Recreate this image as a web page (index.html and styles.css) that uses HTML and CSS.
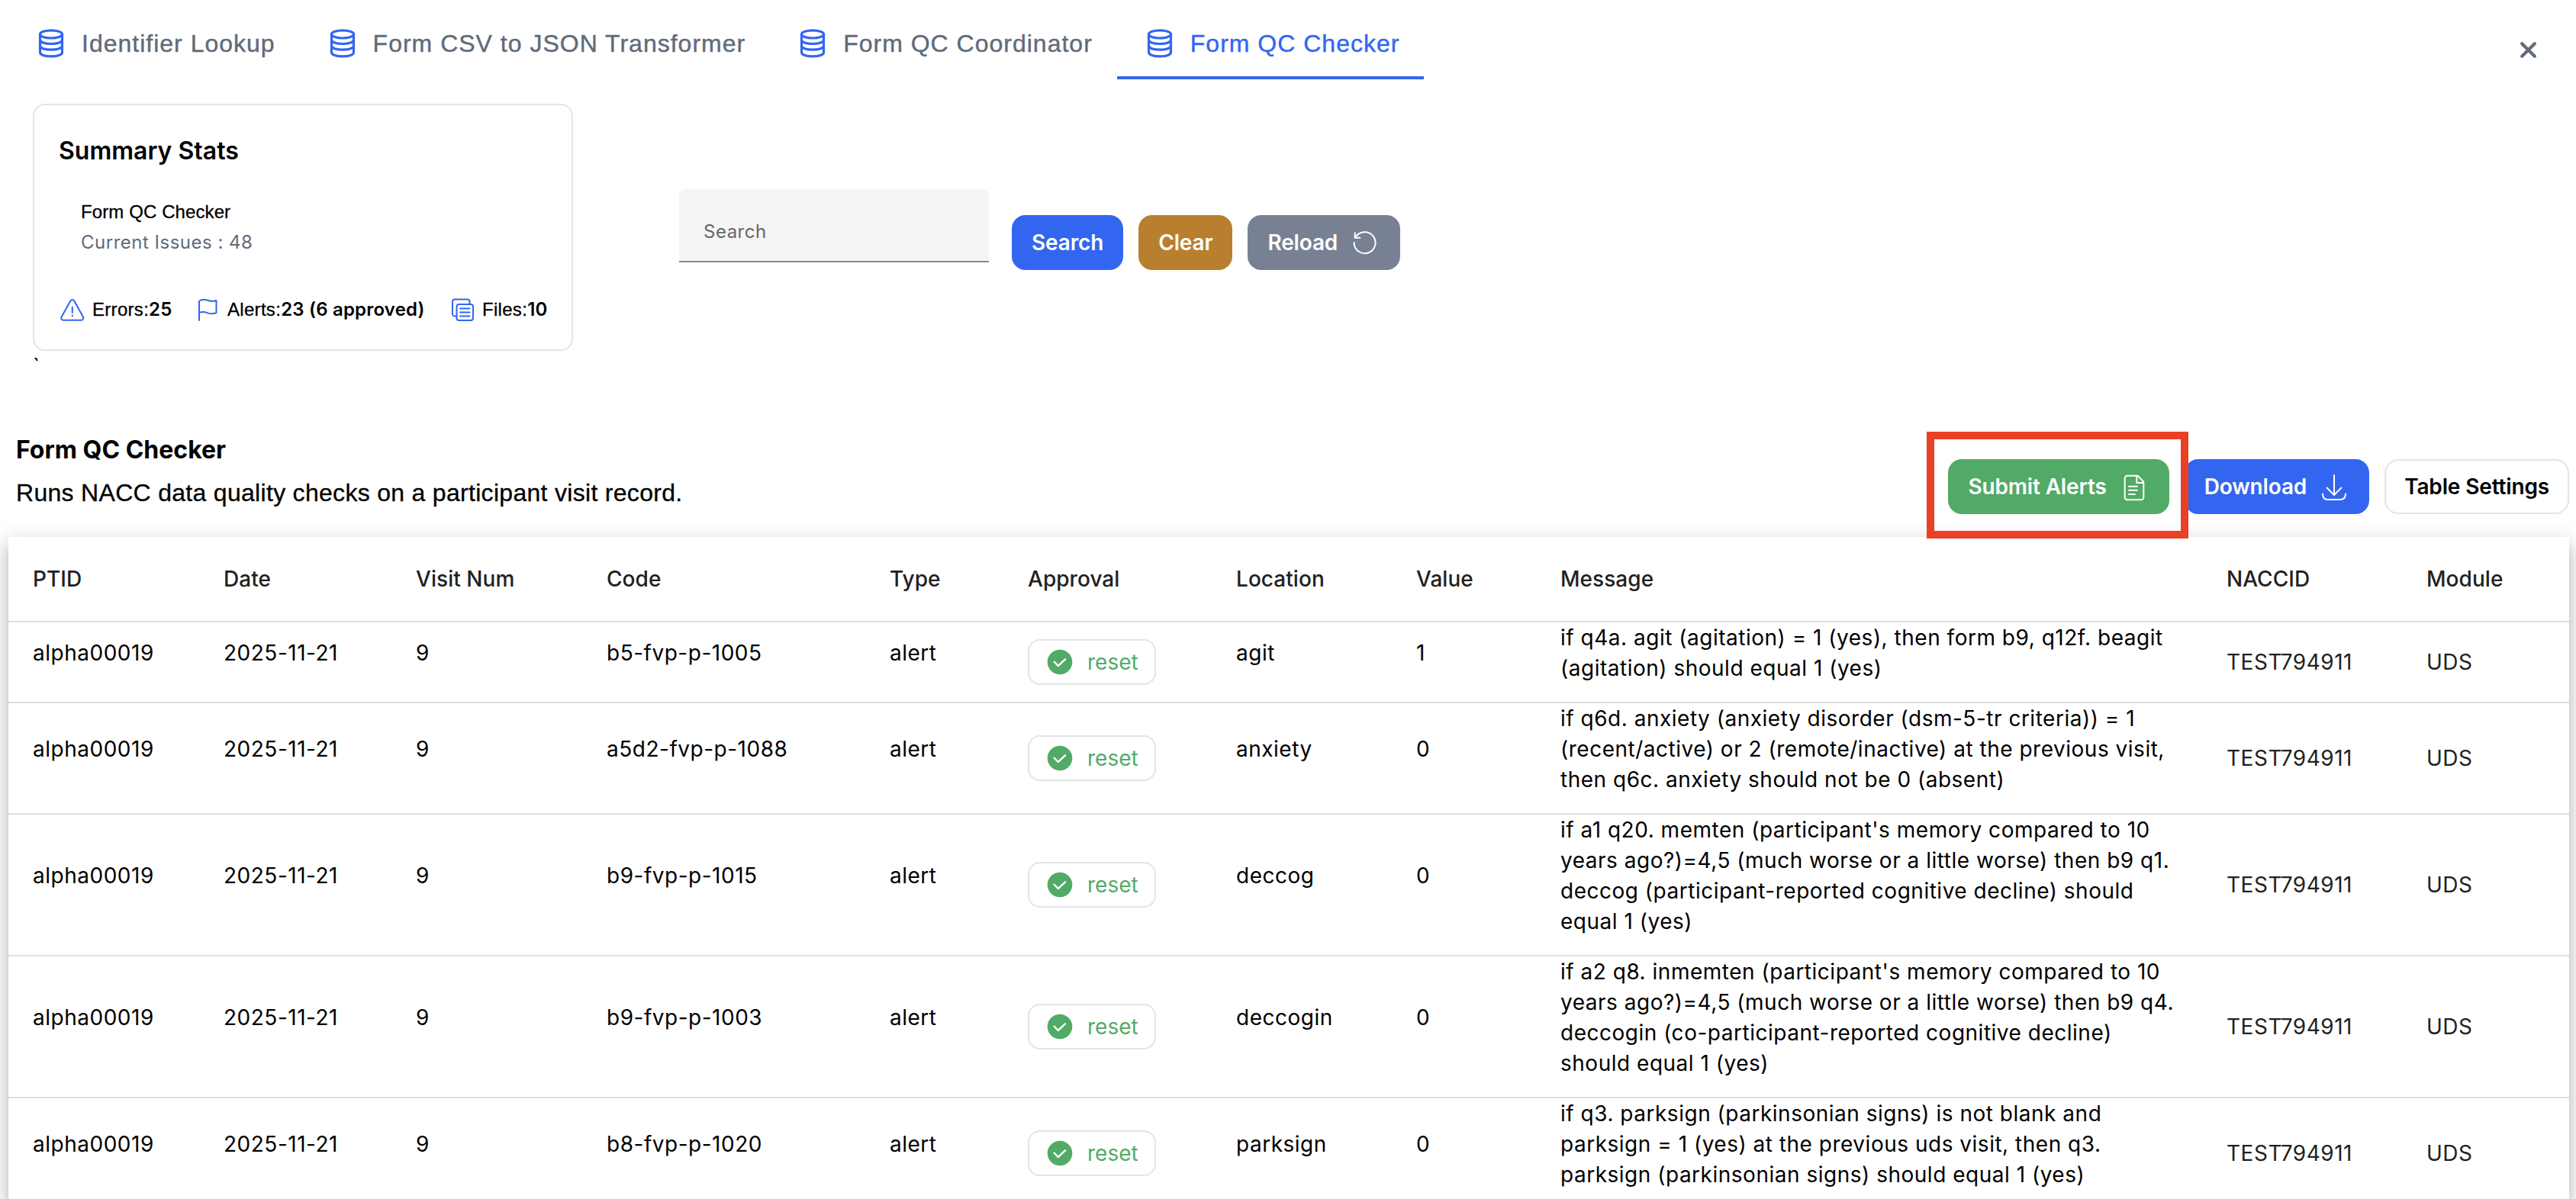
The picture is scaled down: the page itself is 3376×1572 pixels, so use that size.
FILE: index.html
```html
<!DOCTYPE html>
<html lang="en">
<head>
<meta charset="utf-8">
<title>Form QC Checker</title>
<link rel="stylesheet" href="styles.css">
</head>
<body>
<svg class="defs" width="0" height="0">
  <symbol id="db" viewBox="0 0 48 48"><ellipse cx="24" cy="11.9" rx="14.5" ry="5.1"/><path d="M9.5 11.9v23.8c0 3 6 5.2 14.5 5.2s14.5-2.200 14.500-5.200V11.900M9.500 19.300c0 3 6 5.200 14.500 5.200s14.500-2.200 14.500-5.200M9.500 27c0 3 6 5.200 14.500 5.200s14.500-2.200 14.500-5.200"/></symbol>
  <symbol id="check" viewBox="0 0 34 34"><circle cx="17" cy="17" r="16.300" fill="currentColor" stroke="none"/><path d="M9.700 16.700l5 5.300 9.300-8.700" stroke="#fff" stroke-width="2.400"/></symbol>
</svg>

<header class="topbar">
  <nav class="tabs">
    <a class="tab"><svg class="icon db"><use href="#db"/></svg>Identifier Lookup</a>
    <a class="tab"><svg class="icon db"><use href="#db"/></svg>Form CSV to JSON Transformer</a>
    <a class="tab"><svg class="icon db"><use href="#db"/></svg>Form QC Coordinator</a>
    <a class="tab active"><svg class="icon db"><use href="#db"/></svg>Form QC Checker</a>
  </nav>
  <svg class="icon close" viewBox="0 0 24 24"><path d="M4 4l16 16M20 4L4 20"/></svg>
</header>

<section class="overview">
  <div class="summary">
    <div class="card">
      <h2 class="card-title">Summary Stats</h2>
      <div class="card-name">Form QC Checker</div>
      <div class="card-issues">Current Issues : 48</div>
      <div class="stats">
        <div class="stat stat-errors"><svg class="icon small" viewBox="0 0 36 36"><path d="M15.200 6.800L3.800 27.200c-1.300 2.400 0 4.600 2.700 4.600h22.600c2.700 0 4-2.200 2.700-4.600L20.400 6.800c-1.300-2.400-3.900-2.400-5.200 0zM17.800 14.500v7.500M17.800 25.600v1"/></svg><span>Errors:<b>25</b></span></div>
        <div class="stat stat-alerts"><svg class="icon small" viewBox="0 0 36 36"><path d="M7 32V7c3-3.500 8-2.500 12-1 4 1.200 7.500 1 10.500 0v16c-4 2-8 1.600-12 .1-3.500-1.300-7-1.300-10.500-.1"/></svg><span>Alerts:<b>23 (6 approved)</b></span></div>
        <div class="stat stat-files"><svg class="icon small" viewBox="0 0 36 36"><path d="M10.500 26.500H8a3 3 0 0 1-3-3V7.500a3 3 0 0 1 3-3h16.500a3 3 0 0 1 3 3V11"/><rect x="10.500" y="11" width="21.500" height="21" rx="3"/><path d="M15 16.500h12.500M15 21.500h12.500M15 26.500h12.500"/></svg><span>Files:<b>10</b></span></div>
      </div>
    </div>
    <div class="stray">`</div>
  </div>
  <div class="search-row">
    <div class="field">Search</div>
    <button class="btn blue">Search</button>
    <button class="btn amber">Clear</button>
    <button class="btn gray">Reload<svg class="icon mid" viewBox="0 0 40 40"><path d="M5.600 20A14 14 0 1 0 7.800 12.700M6.700 7.300v6.400h6.700"/></svg></button>
  </div>
</section>

<section class="heading">
  <div class="heading-text">
    <h1 class="title">Form QC Checker</h1>
    <p class="desc">Runs NACC data quality checks on a participant visit record.</p>
  </div>
  <div class="actions">
    <div class="submit-wrap">
      <button class="btn green">Submit Alerts<svg class="icon mid" viewBox="0 0 40 40"><path d="M24.700 5.700H11a3.300 3.300 0 0 0-3.300 3.300v25a3.300 3.300 0 0 0 3.300 3.300h18a3.300 3.300 0 0 0 3.300-3.300V13.600zM23.300 5.700v9.300h9M13 19.700h11M13 24.700h11M13 30h8"/></svg></button>
      <div class="callout"></div>
    </div>
    <button class="btn blue">Download<svg class="icon mid" viewBox="0 0 40 40"><path d="M20 5v26M10.500 21.500L20 31l9.500-9.500M5 29.500c0 4.800 2.500 7.500 7 7.500h16c4.500 0 7-2.700 7-7.500"/></svg></button>
    <button class="btn outline">Table Settings</button>
  </div>
</section>

<main class="table">
  <div class="row head"><div>PTID</div><div>Date</div><div>Visit Num</div><div>Code</div><div>Type</div><div>Approval</div><div>Location</div><div>Value</div><div>Message</div><div>NACCID</div><div>Module</div></div>
  <div class="row"><p>alpha00019</p><p>2025-11-21</p><p>9</p><p>b5-fvp-p-1005</p><p>alert</p><button class="reset"><svg class="icon tick"><use href="#check"/></svg>reset</button><p>agit</p><p>1</p><p class="msg">if q4a. agit (agitation) = 1 (yes), then form b9, q12f. beagit (agitation) should equal 1 (yes)</p><div>TEST794911</div><div>UDS</div></div>
  <div class="row"><p>alpha00019</p><p>2025-11-21</p><p>9</p><p>a5d2-fvp-p-1088</p><p>alert</p><button class="reset"><svg class="icon tick"><use href="#check"/></svg>reset</button><p>anxiety</p><p>0</p><p class="msg">if q6d. anxiety (anxiety disorder (dsm-5-tr criteria)) = 1 (recent/active) or 2 (remote/inactive) at the previous visit, then q6c. anxiety should not be 0 (absent)</p><div>TEST794911</div><div>UDS</div></div>
  <div class="row"><p>alpha00019</p><p>2025-11-21</p><p>9</p><p>b9-fvp-p-1015</p><p>alert</p><button class="reset"><svg class="icon tick"><use href="#check"/></svg>reset</button><p>deccog</p><p>0</p><p class="msg">if a1 q20. memten (participant's memory compared to 10 years ago?)=4,5 (much worse or a little worse) then b9 q1. deccog (participant-reported cognitive decline) should equal 1 (yes)</p><div>TEST794911</div><div>UDS</div></div>
  <div class="row"><p>alpha00019</p><p>2025-11-21</p><p>9</p><p>b9-fvp-p-1003</p><p>alert</p><button class="reset"><svg class="icon tick"><use href="#check"/></svg>reset</button><p>deccogin</p><p>0</p><p class="msg">if a2 q8. inmemten (participant's memory compared to 10 years ago?)=4,5 (much worse or a little worse) then b9 q4. deccogin (co-participant-reported cognitive decline) should equal 1 (yes)</p><div>TEST794911</div><div>UDS</div></div>
  <div class="row last"><p>alpha00019</p><p>2025-11-21</p><p>9</p><p>b8-fvp-p-1020</p><p>alert</p><button class="reset"><svg class="icon tick"><use href="#check"/></svg>reset</button><p>parksign</p><p>0</p><p class="msg">if q3. parksign (parkinsonian signs) is not blank and parksign = 1 (yes) at the previous uds visit, then q3. parksign (parkinsonian signs) should equal 1 (yes)</p><div>TEST794911</div><div>UDS</div></div>
</main>
</body>
</html>
```

FILE: styles.css
```css
* { box-sizing: border-box; }
html { height: 1572px; overflow: hidden; }
body {
  margin: 0;
  height: 1572px;
  overflow: hidden;
  background: #fff;
  color: #000;
  font: 28px/40px Inter, "Liberation Sans", sans-serif;
}
h1, h2, p { margin: 0; }
button { font: inherit; border: 0; background: none; cursor: pointer; }
.defs { display: block; }
.icon { flex: none; fill: none; stroke: currentColor; stroke-width: 2; stroke-linecap: round; stroke-linejoin: round; }

.topbar { display: flex; justify-content: space-between; height: 104px; padding: 0 50px 0 11px; }
.tabs { display: flex; }
.tab {
  display: flex;
  align-items: center;
  gap: 16px;
  padding: 14px 32px 0;
  border-bottom: 4px solid transparent;
  color: #5f6b7a;
  font: 32px/48px "Liberation Sans", sans-serif;
  letter-spacing: 1px;
  -webkit-text-stroke: .4px currentColor;
}
.tab.active { color: #3366f0; border-bottom-color: #3366f0; }
.icon.db { width: 48px; height: 48px; color: #3366f0; stroke-width: 3.2; }
.close { width: 25px; height: 25px; margin-top: 53px; color: #5f6b7a; stroke-width: 4; }

.overview { display: flex; height: 442px; padding: 32px 0 0 43px; }
.card {
  width: 708px;
  height: 324px;
  padding: 38px 30px 0 32px;
  border: 2px solid #e4e4e9;
  border-radius: 16px;
}
.card-title { font-size: 32px; line-height: 44px; font-weight: 600; }
.card-name { margin: 38px 0 0 29px; font: 24px/40px "Liberation Sans", sans-serif; letter-spacing: .1px; -webkit-text-stroke: .3px currentColor; }
.card-issues { margin-left: 29px; font-size: 24px; color: #5f6b7a; letter-spacing: .5px; }
.stats { display: flex; margin-top: 48px; height: 40px; }
.stat { display: flex; align-items: center; gap: 8px; font: 24px/40px "Liberation Sans", sans-serif; letter-spacing: .3px; white-space: nowrap; -webkit-text-stroke: .3px currentColor; }
.stat b { font-family: Inter, sans-serif; font-weight: 600; letter-spacing: .2px; -webkit-text-stroke: 0; }
.stat-errors { width: 177px; }
.stat-alerts { width: 334px; }
.icon.small { width: 36px; height: 36px; color: #3366f0; }
.stray { line-height: 40px; }

.search-row { display: flex; align-items: flex-start; gap: 20px; margin: 112px 0 0 139px; }
.field {
  width: 406px;
  height: 96px;
  margin-right: 10px;
  padding: 36px 32px 0;
  border-bottom: 2px solid #8a8a8a;
  border-radius: 8px 8px 0 0;
  background: #f5f5f5;
  color: #666;
  font-size: 24px;
  letter-spacing: .5px;
}
.search-row .btn { margin-top: 34px; }
.btn {
  display: flex;
  align-items: center;
  gap: 16px;
  height: 72px;
  padding: 0 26px;
  border-radius: 18px;
  color: #fff;
  font-weight: 600;
  letter-spacing: -.15px;
  white-space: nowrap;
}
.blue { background: #3366f0; }
.amber { background: #b8802e; }
.gray { background: #778193; }
.green { background: #51ab66; }
.outline { border: 2px solid #e4e4e9; padding: 0 24px; color: #000; }
.icon.mid { width: 40px; height: 40px; }

.heading { display: flex; justify-content: space-between; height: 158px; padding: 20px 9px 0 21px; }
.title { font-size: 32px; line-height: 48px; font-weight: 700; }
.desc { margin-top: 8px; font: 32px/48px "Liberation Sans", sans-serif; letter-spacing: .3px; -webkit-text-stroke: .3px currentColor; }
.actions { display: flex; gap: 20px; margin-top: 36px; height: 72px; }
.submit-wrap { position: relative; }
/* highlight frame lies over the button and its neighbours */
.callout { position: absolute; inset: -36px -25px -32px -28px; z-index: 2; border: 10px solid #ea4025; }

.table {
  margin: 0 9px 0 11px;
  height: 868px;
  background: #fff;
  box-shadow: 0 10px 10px -6px rgba(0,0,0,.2), 0 16px 20px 2px rgba(0,0,0,.14), 0 6px 28px 4px rgba(0,0,0,.12);
}
.row {
  display: grid;
  grid-template-columns: 250px 252px 250px 371px 181px 273px 236px 189px 873px 262px 1fr;
  align-items: center;
  padding-left: 32px;
  border-bottom: 2px solid #dedede;
  letter-spacing: .51px;
}
.row p { margin-bottom: 24px; }
.row > div { color: #212121; }
.row .msg { padding-right: 60px; }
.row.head { height: 112px; font-weight: 500; letter-spacing: .05px; }
/* the last visible row is cut by the bottom of the viewport */
.row.last { height: 132px; grid-template-rows: 144px; border-bottom: 0; overflow: hidden; }
.reset {
  display: flex;
  align-items: center;
  gap: 19px;
  width: 168px;
  height: 60px;
  padding: 0 0 0 23px;
  border: 2px solid #e4e4e9;
  border-radius: 16px;
  color: #51ab66;
}
.icon.tick { width: 34px; height: 34px; }
```
